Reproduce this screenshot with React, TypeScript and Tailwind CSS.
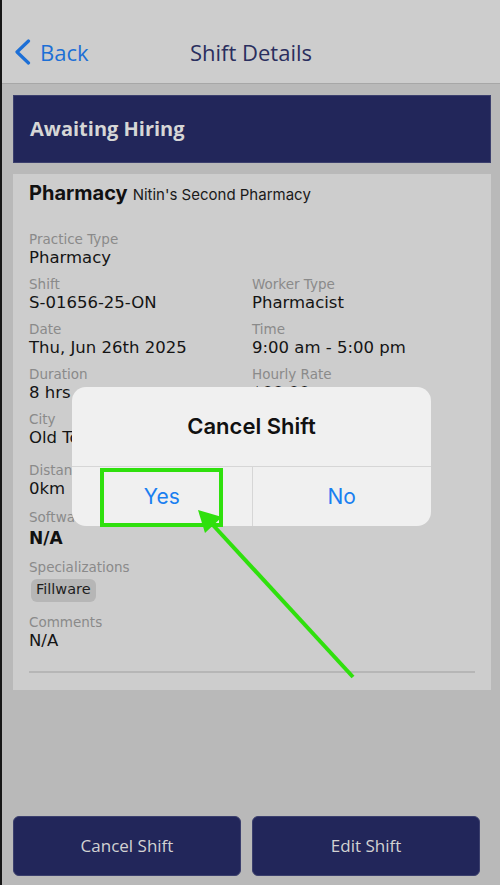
import React from "react";

const font = { fontFamily: '"Open Sans", "Liberation Sans", sans-serif' };
const fieldFont = { fontFamily: '"DejaVu Sans", "Open Sans", sans-serif' };
const sysFont = { fontFamily: 'Inter, "Liberation Sans", sans-serif' };

interface FieldProps {
  label: string;
  value?: string;
  bold?: boolean;
}

const Field: React.FC<FieldProps> = ({ label, value, bold }) => (
  <div className="flex flex-col" style={fieldFont}>
    <span className="h-[17px] text-[13.5px] leading-[17px] text-[#8a8a8a]">{label}</span>
    {value && (
      <span
        className={
          bold
            ? "h-[24px] text-[17px] font-bold leading-[24px] text-[#111]"
            : "h-[20px] text-[16.5px] leading-[20px] text-[#141414]"
        }
      >
        {value}
      </span>
    )}
  </div>
);

export default function App() {
  return (
    <div className="relative flex h-[885px] w-[500px] overflow-hidden bg-[#b9b9b9]" style={font}>
      <div className="w-[2px] shrink-0 bg-[#161616]" />
      <div className="flex flex-1 flex-col">
        {/* header */}
        <div className="flex h-[84px] flex-col justify-end border-b border-[#a7a7a7] bg-[#cdcdcd] pb-[17px]">
          <div className="grid h-[28px] grid-cols-[1fr_auto_1fr] items-center">
            <div className="flex items-center gap-[9px] pl-[12px] text-[#1c6fd6]">
              <svg width="17" height="26" viewBox="0 0 17 26" fill="none">
                <polyline
                  points="14.5,2 3,13 14.5,24"
                  stroke="currentColor"
                  strokeWidth="3.2"
                  strokeLinecap="round"
                  strokeLinejoin="round"
                />
              </svg>
              <span className="text-[22px] leading-[28px]">Back</span>
            </div>
            <span className="text-[22px] leading-[28px] text-[#2a2e5e]">Shift Details</span>
            <div />
          </div>
        </div>

        {/* status banner */}
        <div className="ml-[11px] mt-[11px] flex h-[68px] w-[478px] items-center border border-[#3b3f6d] bg-[#22265a] pl-[16px]">
          <span className="text-[20px] font-bold text-[#d6d6d6]">Awaiting Hiring</span>
        </div>

        {/* details card */}
        <div className="ml-[11px] mt-[11px] flex h-[516px] w-[478px] flex-col bg-[#cdcdcd] px-[16px] pt-[7px]">
          <div className="flex items-baseline gap-[5px]" style={sysFont}>
            <span className="text-[20px] font-bold leading-[24px] text-[#111]">Pharmacy</span>
            <span className="text-[15px] text-[#1a1a1a]">Nitin's Second Pharmacy</span>
          </div>

          <div className="mt-[24px] grid grid-cols-[223px_1fr] gap-y-[8px]">
            <Field label="Practice Type" value="Pharmacy" />
            <div />
            <Field label="Shift" value="S-01656-25-ON" />
            <Field label="Worker Type" value="Pharmacist" />
            <Field label="Date" value="Thu, Jun 26th 2025" />
            <Field label="Time" value="9:00 am - 5:00 pm" />
            <Field label="Duration" value="8 hrs" />
            <Field label="Hourly Rate" value="$00.00" />
            <Field label="City" value="Old Toronto" />
            <div />
          </div>

          <div className="mt-[14px]">
            <Field label="Distance" value="0km" />
          </div>
          <div className="mt-[10px]">
            <Field label="Software" value="N/A" bold />
          </div>
          <div className="mt-[9px] flex flex-col items-start" style={fieldFont}>
            <span className="h-[17px] text-[13.5px] leading-[17px] text-[#8a8a8a]">Specializations</span>
            <span className="ml-[2px] mt-[3px] flex h-[23px] items-center rounded-[6px] bg-[#b6b6b6] px-[5px] text-[14.5px] text-[#1e1e1e]">
              Fillware
            </span>
          </div>
          <div className="mt-[12px]">
            <Field label="Comments" value="N/A" />
          </div>
          <div className="mt-[20px] h-[2px] bg-[#b6b6b6]" />
        </div>

        <div className="flex-1" />

        {/* actions */}
        <div className="mb-[9px] ml-[11px] flex gap-[11px]">
          <button className="flex h-[60px] w-[228px] items-center justify-center rounded-[6px] border border-[#3b3f6d] bg-[#22265a] text-[17px] text-[#d2d2d2]">
            Cancel Shift
          </button>
          <button className="flex h-[60px] w-[228px] items-center justify-center rounded-[6px] border border-[#3b3f6d] bg-[#22265a] text-[17px] text-[#d2d2d2]">
            Edit Shift
          </button>
        </div>
      </div>

      {/* alert */}
      <div
        className="absolute left-[72px] top-[387px] flex h-[139px] w-[359px] flex-col overflow-hidden rounded-[14px] bg-[#f0f0f0]"
        style={sysFont}
      >
        <div className="flex h-[80px] items-center justify-center border-b border-[#d6d6d6]">
          <span className="text-[22px] font-semibold text-[#111]">Cancel Shift</span>
        </div>
        <div className="grid flex-1 grid-cols-2">
          <div className="flex items-center justify-center text-[21px] text-[#1a7ff0]">Yes</div>
          <div className="flex items-center justify-center border-l border-[#d6d6d6] text-[21px] text-[#1a7ff0]">
            No
          </div>
        </div>
      </div>

      {/* annotation */}
      <div className="absolute left-[100px] top-[468px] h-[59px] w-[123px] border-4 border-[#2fe00d]" />
      <svg className="pointer-events-none absolute left-0 top-0" width="500" height="885" viewBox="0 0 500 885">
        <line x1="353" y1="677" x2="212" y2="524" stroke="#2fe00d" strokeWidth="4" />
        <polygon points="198,510 222,517 205,533" fill="#2fe00d" />
      </svg>
    </div>
  );
}
